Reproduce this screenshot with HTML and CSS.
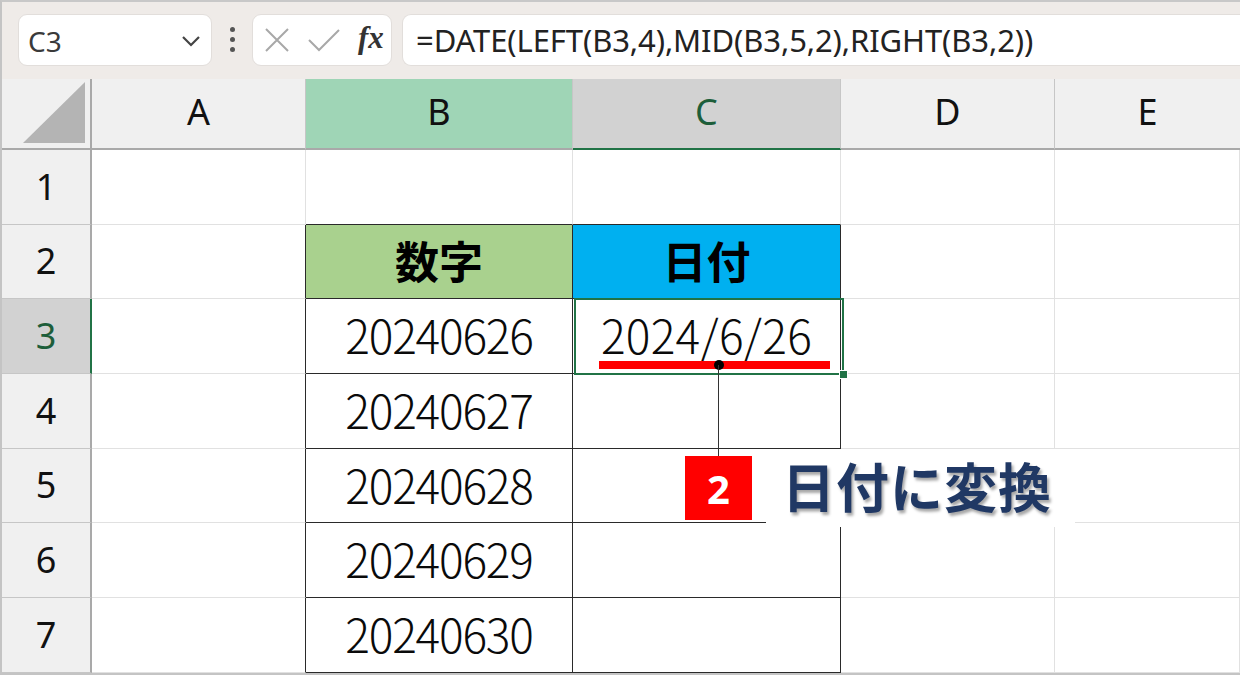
FILE: index.html
```html
<!DOCTYPE html>
<html lang="ja">
<head>
<meta charset="utf-8">
<link rel="stylesheet" href="styles.css">
</head>
<body>
<div class="app">
  <div class="toolbar">
    <div class="namebox">
      <span class="name">C3</span>
      <svg class="chev" width="20" height="12" viewBox="0 0 20 12"><path d="M2 2 L10 10 L18 2" fill="none" stroke="#444" stroke-width="2.2"/></svg>
    </div>
    <div class="dots"><i></i><i></i><i></i></div>
    <div class="iconbox">
      <svg width="26" height="26" viewBox="0 0 26 26"><path d="M2 2 L24 24 M24 2 L2 24" stroke="#a8a8a8" stroke-width="2" fill="none"/></svg>
      <svg width="32" height="24" viewBox="0 0 32 24"><path d="M1 12 L11 22 L31 2" stroke="#a8a8a8" stroke-width="2" fill="none"/></svg>
      <span class="fx">fx</span>
    </div>
    <div class="formula">=DATE(LEFT(B3,4),MID(B3,5,2),RIGHT(B3,2))</div>
  </div>
  <div class="grid">
    <div class="cell corner"><svg width="64" height="62" viewBox="0 0 64 62"><path d="M62 0 L62 61 L0 61 Z" fill="#b4b4b4"/></svg></div>
    <div class="cell ch">A</div>
    <div class="cell ch chb">B</div>
    <div class="cell ch chc">C</div>
    <div class="cell ch">D</div>
    <div class="cell ch che">E</div>

    <div class="cell rh">1</div>
    <div class="cell"></div>
    <div class="cell tt"></div>
    <div class="cell tt"></div>
    <div class="cell"></div>
    <div class="cell"></div>

    <div class="cell rh">2</div>
    <div class="cell tl"></div>
    <div class="cell t thg">数字</div>
    <div class="cell t thb">日付</div>
    <div class="cell"></div>
    <div class="cell"></div>

    <div class="cell rh rhsel">3</div>
    <div class="cell tl"></div>
    <div class="cell t num">20240626</div>
    <div class="cell t num date">2024/6/26</div>
    <div class="cell"></div>
    <div class="cell"></div>

    <div class="cell rh">4</div>
    <div class="cell tl"></div>
    <div class="cell t num">20240627</div>
    <div class="cell t"></div>
    <div class="cell"></div>
    <div class="cell"></div>

    <div class="cell rh">5</div>
    <div class="cell tl"></div>
    <div class="cell t num">20240628</div>
    <div class="cell t"></div>
    <div class="cell"></div>
    <div class="cell"></div>

    <div class="cell rh">6</div>
    <div class="cell tl"></div>
    <div class="cell t num">20240629</div>
    <div class="cell t"></div>
    <div class="cell"></div>
    <div class="cell"></div>

    <div class="cell rh">7</div>
    <div class="cell tl"></div>
    <div class="cell t num">20240630</div>
    <div class="cell t"></div>
    <div class="cell"></div>
    <div class="cell"></div>

    <div class="sel"><span class="handle"></span></div>
    <div class="underline"></div>
    <div class="dot"></div>
    <div class="leader"></div>
    <div class="callout">
      <span class="badge">2</span>
      <span class="label">日付に変換</span>
    </div>
  </div>
</div>
</body>
</html>
```
FILE: styles.css
```css
* { box-sizing: border-box; }
html, body { margin: 0; padding: 0; background: #fff; }
.app {
  width: 1240px;
  height: 675px;
  border-left: 2px solid #c4c4c4;
  border-top: 2px solid #c8c8c8;
  border-bottom: 2px solid #c4c4c4;
  overflow: hidden;
  font-family: "Noto Sans", "Noto Sans CJK JP", sans-serif;
}
.toolbar {
  height: 77px;
  background: #efebe8;
  display: flex;
  align-items: center;
  padding: 0 0 2px 16px;
}
.namebox {
  width: 194px;
  height: 52px;
  background: #fff;
  border: 1px solid #e2dedb;
  border-radius: 9px;
  display: flex;
  align-items: center;
  justify-content: space-between;
  padding: 0 10px 0 9px;
}
.name { font-size: 28px; color: #3a3a3a; font-family: "Noto Sans", sans-serif; margin-top: 2px; }
.chev { margin-top: 2px; }
.dots {
  width: 40px;
  display: flex;
  flex-direction: column;
  align-items: center;
  gap: 5px;
}
.dots i { display: block; width: 5px; height: 5px; border-radius: 50%; background: #555; }
.iconbox {
  width: 140px;
  height: 52px;
  background: #fff;
  border: 1px solid #e2dedb;
  border-radius: 9px;
  display: flex;
  align-items: center;
  gap: 18px;
  padding: 0 0 0 11px;
}
.fx {
  font-family: "Liberation Serif", "DejaVu Serif", serif;
  font-style: italic;
  font-size: 31px;
  font-weight: bold;
  color: #333;
  margin-top: -4px;
}
.formula {
  flex: 1;
  margin-left: 10px;
  height: 52px;
  background: #fff;
  border: 1px solid #e2dedb;
  border-right: none;
  border-radius: 9px 0 0 9px;
  display: flex;
  align-items: center;
  padding-left: 13px;
  font-family: "Noto Sans", sans-serif;
  font-size: 31px;
  letter-spacing: -0.1px;
  color: #222;
  white-space: nowrap;
}
.grid {
  position: relative;
  display: grid;
  grid-template-columns: 90px 214px 267px 268px 214px 1fr;
  grid-template-rows: 71px 75px 74px 75px 75px 74px 75px 75px;
}
.cell {
  border-right: 1px solid #e1e1e1;
  border-bottom: 1px solid #e1e1e1;
  display: flex;
  align-items: center;
  justify-content: center;
}
.corner {
  background: #f0f0f0;
  border-right: 2px solid #a9a9a9;
  border-bottom: 2px solid #a9a9a9;
  align-items: flex-end;
  justify-content: flex-end;
  padding: 0 3px 4px 0;
}
.ch {
  background: #f0f0f0;
  border-right: 1px solid #c6c6c6;
  border-bottom: 2px solid #a9a9a9;
  font-size: 36px;
  color: #111;
  padding-bottom: 4px;
}
.che { border-right: none; }
.chb { background: #9fd5b6; }
.chc { background: #d2d2d2; color: #1d5e3a; border-bottom: 2px solid #217346; }
.rh {
  background: #f0f0f0;
  border-right: 2px solid #a9a9a9;
  border-bottom: 1px solid #c6c6c6;
  font-size: 36px;
  color: #111;
  padding-bottom: 2px;
}
.rhsel { background: #d2d2d2; color: #1d5e3a; border-right: 2px solid #217346; }
.tt { border-bottom: 1px solid #2a2a2a; }
.tl { border-right: 1px solid #2a2a2a; }
.t {
  border-right: 1px solid #2a2a2a;
  border-bottom: 1px solid #2a2a2a;
}
.thg { background: #a9d18e; }
.thb { background: #00b0f0; }
.thg, .thb {
  font-family: "Noto Sans CJK JP", sans-serif;
  font-weight: bold;
  font-size: 44px;
  color: #000;
  padding-bottom: 4px;
}
.num {
  font-family: "Noto Sans CJK JP", sans-serif;
  font-weight: 300;
  font-size: 46px;
  letter-spacing: -1.2px;
  color: #0a0a0a;
  padding-bottom: 4px;
}
.date { letter-spacing: 0.3px; }
.sel {
  position: absolute;
  left: 572px;
  top: 219px;
  width: 270px;
  height: 77px;
  border: 2px solid #217346;
}
.handle {
  position: absolute;
  right: -6px;
  bottom: -6px;
  width: 9px;
  height: 9px;
  background: #217346;
  border: 1px solid #fff;
}
.underline {
  position: absolute;
  left: 597px;
  top: 282px;
  width: 231px;
  height: 8px;
  background: #ff0000;
}
.dot {
  position: absolute;
  left: 712px;
  top: 281px;
  width: 10px;
  height: 10px;
  border-radius: 50%;
  background: #000;
}
.leader {
  position: absolute;
  left: 716px;
  top: 286px;
  width: 1px;
  height: 92px;
  background: #333;
}
.callout {
  position: absolute;
  left: 683px;
  top: 370px;
  display: flex;
  align-items: stretch;
}
.badge {
  width: 67px;
  height: 64px;
  margin-top: 7px;
  background: #ff0000;
  color: #fff;
  font-family: "Noto Sans", sans-serif;
  font-weight: bold;
  font-size: 40px;
  display: flex;
  align-items: center;
  justify-content: center;
}
.label {
  margin-left: 14px;
  width: 309px;
  height: 78px;
  background: #fff;
  font-family: "Noto Sans CJK JP", sans-serif;
  font-weight: bold;
  font-size: 53px;
  color: #203864;
  text-shadow: 2px 3px 3px rgba(0,0,0,0.35);
  display: flex;
  align-items: center;
  padding-left: 16px;
  padding-bottom: 6px;
  letter-spacing: 1px;
}
```
